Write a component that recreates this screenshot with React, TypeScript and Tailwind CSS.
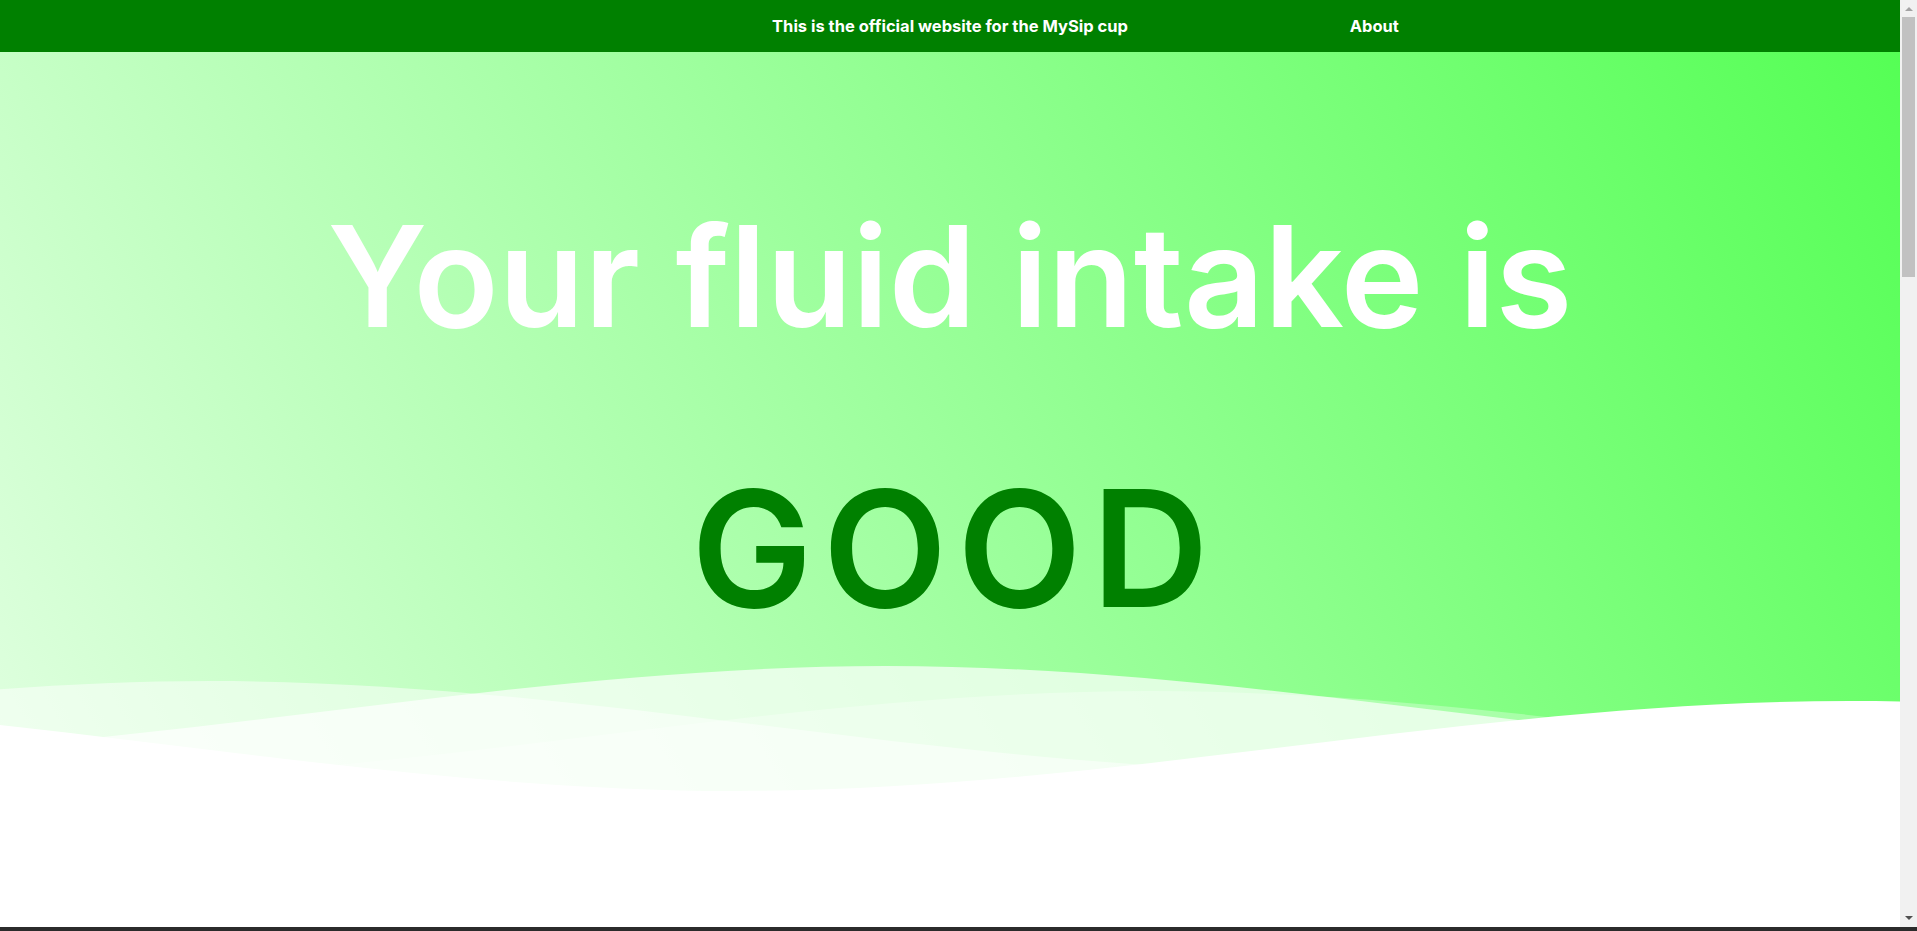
function Scrollbar() {
  return (
    <div className="fixed top-0 right-0 bottom-[4px] flex w-[17px] flex-col bg-[#f1f1f1]">
      <div className="flex h-[17px] items-center justify-center">
        <svg width="8" height="5" viewBox="0 0 8 5">
          <path d="M0 5 L4 1 L8 5 Z" fill="#a3a3a3" />
        </svg>
      </div>
      <div className="flex-1">
        <div className="mx-[2px] h-[260px] bg-[#c1c1c1]" />
      </div>
      <div className="flex h-[17px] items-center justify-center">
        <svg width="8" height="5" viewBox="0 0 8 5">
          <path d="M0 0 L4 4 L8 0 Z" fill="#505050" />
        </svg>
      </div>
    </div>
  )
}

export default function App() {
  return (
    <div className="min-h-screen bg-white pr-[17px] font-['Inter',sans-serif]">
      <nav className="grid h-[52px] grid-cols-3 items-center bg-[#008000] text-[16.5px] font-bold text-white">
        <div />
        <a className="text-center">This is the official website for the MySip cup</a>
        <a className="pl-[83px]">About</a>
      </nav>

      <header className="bg-[linear-gradient(60deg,#e0ffe0_0%,#55ff55_100%)] text-center">
        <div className="flex h-[604px] flex-col items-center pt-[154px]">
          <h1 className="text-[140px] font-semibold leading-none text-white">Your fluid intake is</h1>
          <p className="mt-[121px] pl-[10px] text-[162px] font-semibold leading-none tracking-[10px] text-[#008000]">
            GOOD
          </p>
        </div>

        <svg
          className="block h-[140px] w-full"
          viewBox="0 24 150 28"
          preserveAspectRatio="none"
          xmlns="http://www.w3.org/2000/svg"
        >
          <defs>
            <path
              id="gentle-wave"
              d="M-160 44c30 0 58-18 88-18s 58 18 88 18 58-18 88-18 58 18 88 18 v44h-352z"
            />
          </defs>
          <g>
            <use href="#gentle-wave" x="-34.1" y="0" fill="rgba(255,255,255,0.7)" />
            <use href="#gentle-wave" x="88.6" y="3" fill="rgba(255,255,255,0.5)" />
            <use href="#gentle-wave" x="-13.2" y="5" fill="rgba(255,255,255,0.3)" />
            <use href="#gentle-wave" x="42.1" y="7" fill="#fff" />
          </g>
        </svg>
      </header>

      <section className="h-[2300px] bg-white" />

      <Scrollbar />
      <div className="fixed inset-x-0 bottom-0 h-[4px] bg-[#2b2b2b]" />
    </div>
  )
}
